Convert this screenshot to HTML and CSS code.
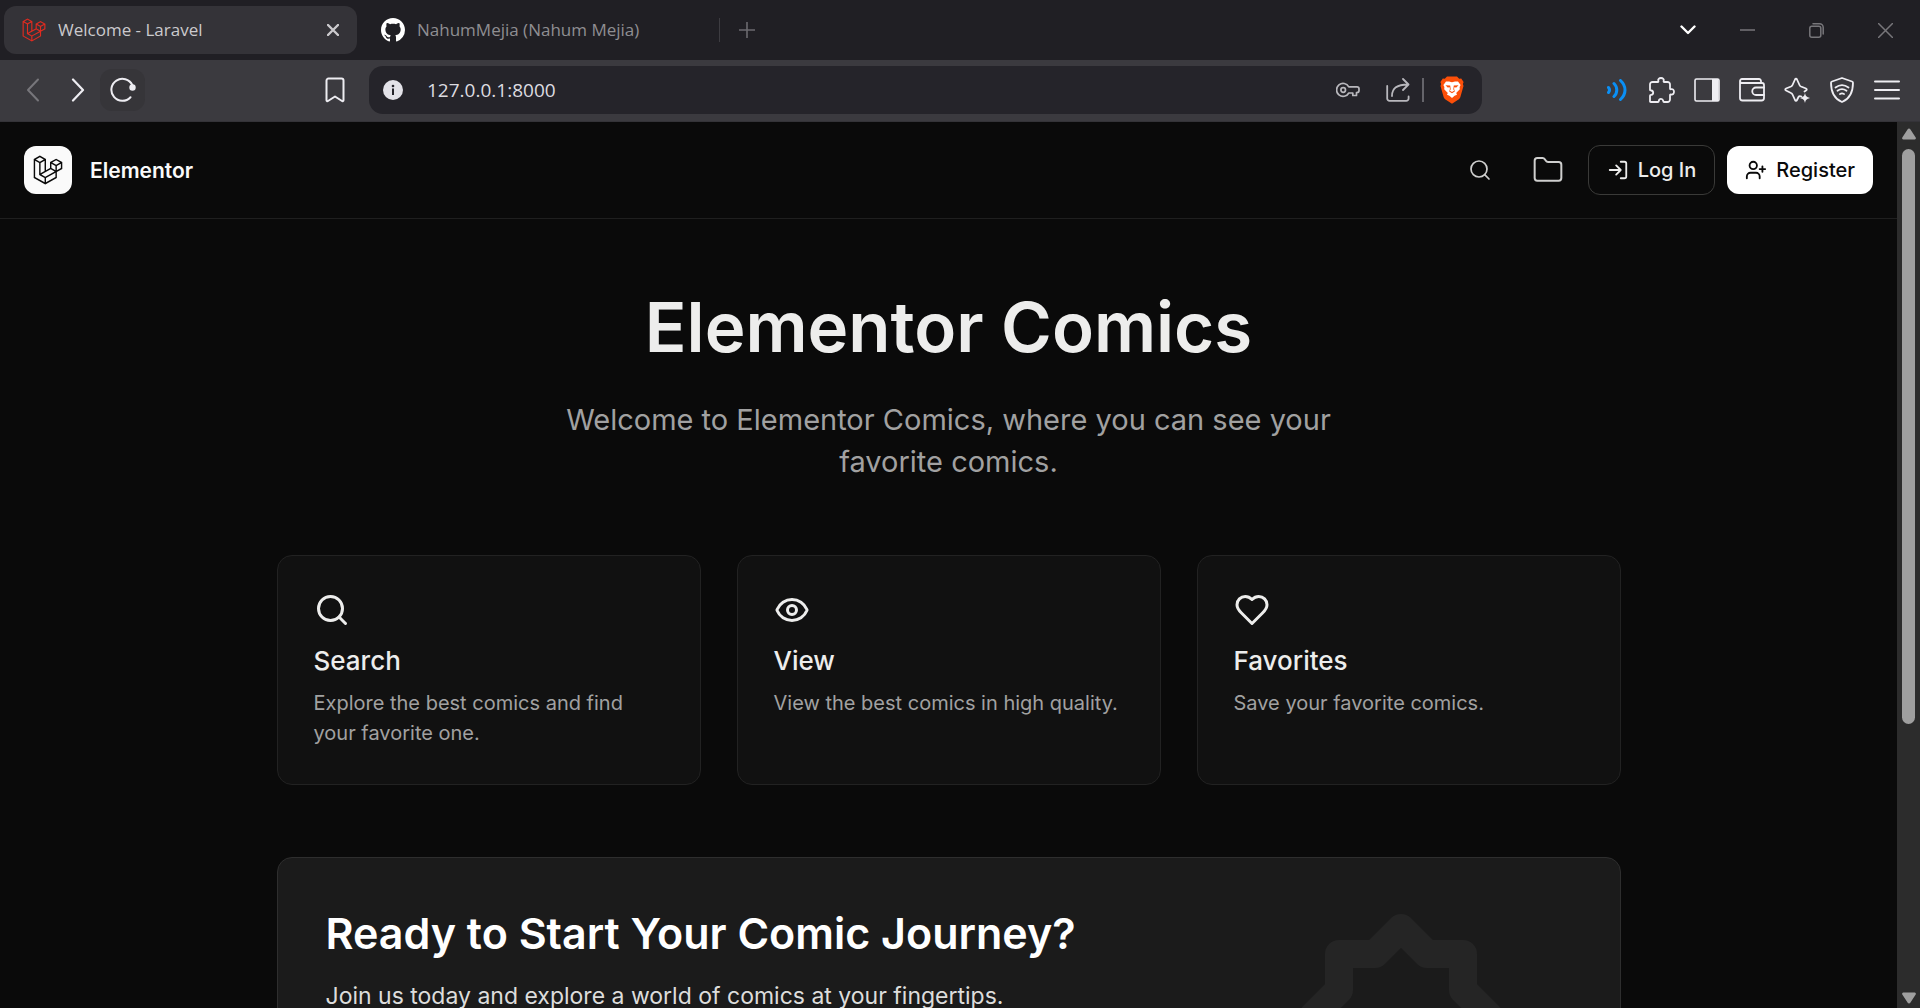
FILE: index.html
```html
<!DOCTYPE html>
<html lang="en">
<head>
<meta charset="utf-8">
<meta name="viewport" content="width=device-width, initial-scale=1">
<title>Welcome - Laravel</title>
<link rel="stylesheet" href="styles.css">
</head>
<body>
<svg class="sprite" aria-hidden="true">
  <symbol id="laravel" viewBox="0 0 40 42"><path fill="currentColor" fill-rule="evenodd" clip-rule="evenodd" d="M17.2 5.633 8.6.855 0 5.633v26.51l16.2 9 16.2-9v-8.442l7.6-4.223V9.856l-8.6-4.777-8.6 4.777V18.3l-5.6 3.111V5.633ZM38 18.301l-5.6 3.11v-6.157l5.6-3.11V18.3Zm-1.06-7.856-5.54 3.078-5.54-3.079 5.54-3.078 5.54 3.079ZM24.8 18.3v-6.157l5.6 3.111v6.158L24.8 18.3Zm-1 1.732 5.54 3.078-13.14 7.302-5.54-3.078 13.14-7.3v-.002Zm-16.2 7.89 7.6 4.222V38.3L2 30.966V7.92l5.6 3.111v16.892ZM8.6 9.3 3.06 6.222 8.6 3.143l5.54 3.08L8.6 9.3Zm21.8 15.51-13.2 7.334V38.3l13.2-7.334v-6.156ZM9.6 11.034l5.6-3.11v14.6l-5.6 3.11v-14.6Z"/></symbol>
  <symbol id="search" viewBox="0 0 24 24"><circle cx="11" cy="11" r="8"/><path d="m21 21-4.3-4.3"/></symbol>
</svg>

<div class="tabstrip">
  <div class="tab tab-active">
    <svg class="favicon favicon-laravel"><use href="#laravel"/></svg>
    <span class="tab-title">Welcome - Laravel</span>
    <button class="tab-close" aria-label="Close tab"><svg width="12" height="12" viewBox="0 0 12 12" class="line"><path stroke-width="2.4" d="m1 1 10 10M11 1 1 11"/></svg></button>
  </div>
  <div class="tab">
    <svg class="favicon" viewBox="0 0 16 16"><path fill="#fff" d="M8 0C3.58 0 0 3.58 0 8c0 3.54 2.29 6.53 5.47 7.59.4.07.55-.17.55-.38 0-.19-.01-.82-.01-1.49-2.01.37-2.53-.49-2.69-.94-.09-.23-.48-.94-.82-1.13-.28-.15-.68-.52-.01-.53.63-.01 1.08.58 1.23.82.72 1.21 1.87.87 2.33.66.07-.52.28-.87.51-1.07-1.78-.2-3.64-.89-3.64-3.95 0-.87.31-1.59.82-2.15-.08-.2-.36-1.02.08-2.12 0 0 .67-.21 2.2.82.64-.18 1.32-.27 2-.27.68 0 1.36.09 2 .27 1.53-1.04 2.2-.82 2.2-.82.44 1.1.16 1.92.08 2.12.51.56.82 1.27.82 2.15 0 3.07-1.87 3.75-3.65 3.95.29.25.54.73.54 1.48 0 1.07-.01 1.93-.01 2.2 0 .21.15.46.55.38A8.013 8.013 0 0 0 16 8c0-4.42-3.58-8-8-8z"/></svg>
    <span class="tab-title">NahumMejia (Nahum Mejia)</span>
  </div>
  <button class="new-tab" aria-label="New tab"><svg width="16" height="16" viewBox="0 0 16 16" class="line"><path stroke-width="1.6" d="M8 0v16M0 8h16"/></svg></button>
  <div class="window-controls">
    <button class="tab-list" aria-label="Search tabs"><svg width="16" height="10" viewBox="0 0 16 10" class="line"><path stroke-width="2.4" d="m1.500 1.500 6.500 6.500 6.500-6.500"/></svg></button>
    <button aria-label="Minimize"><svg width="15" height="15" viewBox="0 0 15 15" class="line"><path stroke-width="1.500" d="M0 7h15"/></svg></button>
    <button aria-label="Restore"><svg width="15" height="15" viewBox="0 0 15 15" class="line"><g stroke-width="1.500"><rect x=".8" y="3.200" width="11" height="11" rx="2"/><path d="M4 .8h6.500a3.700 3.700 0 0 1 3.700 3.700V11"/></g></svg></button>
    <button aria-label="Close window"><svg width="15" height="15" viewBox="0 0 15 15" class="line"><path stroke-width="1.500" d="m0 0 15 15M15 0 0 15"/></svg></button>
  </div>
</div>

<div class="toolbar">
  <div class="toolbar-left">
    <button class="tool dim" aria-label="Back"><svg width="14" height="24" viewBox="0 0 14 24" class="line"><path stroke-width="2" d="M12 1.500 2 12l10 10.500"/></svg></button>
    <button class="tool" aria-label="Forward"><svg width="14" height="24" viewBox="0 0 14 24" class="line"><path stroke-width="2.200" d="m2 1.500 10 10.500L2 22.500"/></svg></button>
    <button class="tool reload" aria-label="Reload"><svg width="26" height="26" viewBox="0 0 26 26" class="line"><path stroke-width="2" d="M20.500 20.200A11 11 0 1 1 22.300 8"/><circle cx="22.500" cy="10.500" r="3.200" fill="currentColor" stroke="none"/></svg></button>
    <button class="tool bookmark" aria-label="Bookmark"><svg width="20" height="26" viewBox="0 0 20 26" class="line"><path stroke-width="2" d="M1.500 3.500a2 2 0 0 1 2-2h13a2 2 0 0 1 2 2v19.700c0 .9-.9 1.300-1.500.8L10 19.500 3 24c-.7.500-1.500.1-1.500-.8z"/></svg></button>
  </div>
  <div class="address">
    <svg width="20" height="20" viewBox="0 0 20 20"><circle cx="10" cy="10" r="10" fill="#e3e2e8"/><circle cx="10" cy="6" r="1.300" fill="#25242a"/><path stroke="#25242a" stroke-width="2" d="M10 8.500V15"/></svg>
    <input type="text" value="127.0.0.1:8000" aria-label="Address">
    <svg width="24" height="16" viewBox="0 0 24 16" class="line address-key"><g stroke-width="1.700"><path d="M12.800 4.800A6.500 6.500 0 1 0 12.800 11h4v2.500h3.700V10.500h.5a2 2 0 0 0 2-2V6.800a2 2 0 0 0-2-2z"/><circle cx="7.200" cy="8" r="2.300"/></g></svg>
    <svg width="24" height="24" viewBox="0 0 24 24" class="line address-share"><g stroke-width="1.800"><path d="M1.200 8v12.500a2.300 2.300 0 0 0 2.300 2.300h16.800a2.300 2.300 0 0 0 2.300-2.300v-2"/><path d="M6 18C6 11 10 6.500 22 6.500M17 1l5.500 5.500L17 12"/></g></svg>
    <span class="address-divider"></span>
    <svg width="24" height="28" viewBox="0 0 24 28"><path fill="#fb4f09" d="M7 .5h10l2.200 2.300 2-.2L23.600 6l-.7 2 .6 2-3.200 11.200a4 4 0 0 1-1.400 2L12 27.800l-6.900-4.600a4 4 0 0 1-1.400-2L.5 10l.6-2-.7-2 2.400-3.400 2 .2z"/><path fill="#fff" d="m12 6.200 3-.7 3 .1L20.600 9l-1 2 .2 2.300-3.600 3.800.8 1.600-2.400 1.100L12 21.900l-2.600-2.100L7 18.700l.8-1.600-3.600-3.800.2-2.300-1-2L6 5.600l3-.1z"/><path fill="#fb4f09" d="m5.500 9.300 4.700.2.500 3.700-.8 1.600L12 16l2.100-1.200-.8-1.600.5-3.700 4.700-.2-2.200 2.200-2-.2-.2 1.800.7 2.300L12 17.300l-2.800-1.900.7-2.300-.2-1.800-2 .2z"/></svg>
  </div>
  <div class="toolbar-right">
    <button class="tool voice" aria-label="Voice"><svg width="20" height="22" viewBox="0 0 20 22" class="line"><g stroke-width="3"><path d="M1.500 8.500a4 4 0 0 1 0 5M7 4.500a9 9 0 0 1 0 13M13.500 1.500c6 5.500 6 13.500 0 19"/></g></svg></button>
    <button class="tool" aria-label="Extensions"><svg width="26" height="26" viewBox="0 0 26 26" class="line"><path stroke-width="1.800" d="M3.500 5h5.200c.8 0 .8-.5.600-1.200C8.800 2.300 10 1 12 1s3.200 1.300 2.700 2.800c-.2.700-.2 1.200.6 1.200h3.200A2.500 2.500 0 0 1 21 7.500v4c0 .8.500.8 1.200.7 1.500-.3 2.800.7 2.800 2.600s-1.300 3-2.800 2.700c-.7-.2-1.200-.1-1.200.7v4.300a2.500 2.500 0 0 1-2.500 2.500H15c-.8 0-.7-.6-.8-1.200-.3-1.300-1-2-2.200-2s-2 .7-2.200 2c-.1.600 0 1.200-.8 1.200H1.800c-.5 0-.8-.3-.8-.8v-5.500c0-.8.500-.8 1.200-.9 1.300-.2 2-.9 2-2.100s-.7-2-2-2.200C1.500 13.400 1 13.500 1 12.700V7.500A2.500 2.500 0 0 1 3.500 5z"/></svg></button>
    <button class="tool" aria-label="Side panel"><svg width="26" height="24" viewBox="0 0 26 24"><rect x="1" y="1" width="24" height="22" rx="1.500" fill="none" stroke="#eeedf2" stroke-width="1.600"/><path fill="#eeedf2" d="M18 1h6.500v22H18z"/></svg></button>
    <button class="tool" aria-label="Wallet"><svg width="26" height="24" viewBox="0 0 26 24" class="line"><g stroke-width="1.800"><path d="M22 5V3a2 2 0 0 0-2-2H3a2 2 0 0 0 0 4h20a2 2 0 0 1 2 2v13a2.500 2.500 0 0 1-2.500 2.500h-19A2.500 2.500 0 0 1 1 20V3"/><path d="M25 9.500h-8a3.700 3.700 0 0 0 0 7.500h8"/></g></svg></button>
    <button class="tool" aria-label="Assistant"><svg width="26" height="26" viewBox="0 0 26 26" class="line"><path stroke-width="1.800" d="M17.500 19.500c-1.500-.5-2.500-.5-3 .5l-1.500 3c-.5 1-1.500 1-2 0l-2.500-5.500a3 3 0 0 0-1.500-1.500L2 13.500c-1-.5-1-1.500 0-2L7 9.500A3 3 0 0 0 8.500 8L11 2.500c.5-1 1.500-1 2 0L15.500 8A3 3 0 0 0 17 9.500l5 2c1 .5 1 1.500 0 2l-1.500 1"/><path fill="currentColor" stroke="none" d="M21 16c.7 3 1.500 4 5 5-3.500 1-4.300 2-5 5-.7-3-1.500-4-5-5 3.500-1 4.300-2 5-5z"/></svg></button>
    <button class="tool" aria-label="VPN"><svg width="24" height="26" viewBox="0 0 24 26" class="line"><g stroke-width="1.800"><path d="m12 1 10 3.500c.6.200 1 .6 1 1.200C23 15 20.500 21.500 12 25 3.500 21.500 1 15 1 5.700c0-.6.400-1 1-1.200z"/><path d="M5.500 10.500c4-3 9-3 13 0M7.500 13.800c3-2.200 6-2.200 9 0M10 17c1.500-.8 2.500-.8 4 0"/></g></svg></button>
    <button class="tool" aria-label="Menu"><svg width="26" height="20" viewBox="0 0 26 20" class="line"><path stroke-width="2" d="M1 1.500h24M1 10h24M1 18.500h24"/></svg></button>
  </div>
</div>

<div class="viewport">
  <div class="page">
    <header class="site-header">
      <a class="brand" href="#">
        <span class="brand-mark"><svg width="30" height="30"><use href="#laravel"/></svg></span>
        <span>Elementor</span>
      </a>
      <nav class="site-nav">
        <button class="icon-button" aria-label="Search"><svg width="24" height="24" class="line"><use href="#search" stroke-width="1.700"/></svg></button>
        <a class="icon-button" href="#" aria-label="Library"><svg width="32" height="32" viewBox="0 0 24 24" class="line"><path stroke-width="1.500" d="M20 20a2 2 0 0 0 2-2V8a2 2 0 0 0-2-2h-7.900a2 2 0 0 1-1.700-.9L9.600 3.900A2 2 0 0 0 7.900 3H4a2 2 0 0 0-2 2v13a2 2 0 0 0 2 2Z"/></svg></a>
        <a class="button button-outline" href="#"><svg width="22" height="22" viewBox="0 0 24 24" class="line"><path stroke-width="2" d="M15 3h4a2 2 0 0 1 2 2v14a2 2 0 0 1-2 2h-4M10 17l5-5-5-5M15 12H3"/></svg>Log In</a>
        <a class="button button-solid" href="#"><svg width="22" height="22" viewBox="0 0 24 24" class="line"><path stroke-width="2" d="M16 21v-2a4 4 0 0 0-4-4H6a4 4 0 0 0-4 4v2M19 8v6M22 11h-6"/><circle cx="9" cy="7" r="4" stroke-width="2"/></svg>Register</a>
      </nav>
    </header>

    <main class="content">
      <section class="hero">
        <h1>Elementor Comics</h1>
        <p>Welcome to Elementor Comics, where you can see your favorite comics.</p>
      </section>

      <section class="features">
        <article class="card">
          <svg width="36" height="36" class="line"><use href="#search" stroke-width="2"/></svg>
          <h2>Search</h2>
          <p>Explore the best comics and find your favorite one.</p>
        </article>
        <article class="card">
          <svg width="36" height="36" viewBox="0 0 24 24" class="line"><g stroke-width="2"><path d="M2.062 12.348a1 1 0 0 1 0-.696 10.750 10.750 0 0 1 19.876 0 1 1 0 0 1 0 .696 10.750 10.750 0 0 1-19.876 0"/><circle cx="12" cy="12" r="3"/></g></svg>
          <h2>View</h2>
          <p>View the best comics in high quality.</p>
        </article>
        <article class="card">
          <svg width="36" height="36" viewBox="0 0 24 24" class="line"><path stroke-width="2" d="M19 14c1.490-1.460 3-3.210 3-5.500A5.500 5.500 0 0 0 16.500 3c-1.760 0-3 .5-4.500 2-1.500-1.500-2.740-2-4.500-2A5.500 5.500 0 0 0 2 8.500c0 2.300 1.500 4.050 3 5.500l7 7Z"/></svg>
          <h2>Favorites</h2>
          <p>Save your favorite comics.</p>
        </article>
      </section>

      <section class="cta">
        <div class="cta-text">
          <h2>Ready to Start Your Comic Journey?</h2>
          <p>Join us today and explore a world of comics at your fingertips.</p>
        </div>
        <div class="cta-art">
          <svg width="220" height="220" viewBox="-110 -110 220 220"><path fill="none" stroke="#252525" stroke-width="28" stroke-linejoin="round" d="M0-88 26-62H62V-26L88 0 62 26V62H26L0 88-26 62H-62V26L-88 0-62-26V-62H-26Z"/></svg>
        </div>
      </section>
    </main>
  </div>
  <div class="scrollbar">
    <svg width="16" height="12" viewBox="0 0 16 12"><path fill="#9f9f9f" d="M6.700 1.200a1.500 1.500 0 0 1 2.600 0l5.400 8.300a1.300 1.300 0 0 1-1 2H2.300a1.300 1.300 0 0 1-1-2z"/></svg>
    <div class="scroll-track"><div class="scroll-thumb"></div></div>
    <svg width="16" height="12" viewBox="0 0 16 12"><path fill="#9f9f9f" d="M6.700 10.800a1.500 1.500 0 0 0 2.600 0l5.400-8.300a1.300 1.300 0 0 0-1-2H2.300a1.300 1.300 0 0 0-1 2z"/></svg>
  </div>
</div>
</body>
</html>
```
FILE: styles.css
```css
* { box-sizing: border-box; }

body {
  margin: 0;
  height: 100vh;
  display: flex;
  flex-direction: column;
  overflow: hidden;
  background: #0a0a0a;
  color: #ededec;
  font-family: Inter, "Liberation Sans", sans-serif;
}

h1, h2, p { margin: 0; }
a { color: inherit; text-decoration: none; }
svg { display: block; flex: none; }
button {
  padding: 0;
  border: 0;
  background: none;
  color: inherit;
  display: flex;
  align-items: center;
  justify-content: center;
}

.sprite { position: absolute; width: 0; height: 0; }
.line { fill: none; stroke: currentColor; stroke-linecap: round; stroke-linejoin: round; }

/* Browser tabs */
.tabstrip {
  flex: none;
  height: 60px;
  padding-left: 4px;
  display: flex;
  align-items: center;
  background: #201f24;
  font: 17px/24px "Open Sans", "Noto Sans", sans-serif;
}
.tab {
  width: 353px;
  height: 48px;
  padding: 0 18px;
  display: flex;
  align-items: center;
  gap: 12px;
  border-radius: 12px;
  color: #8f8e92;
}
.tab + .tab { padding-left: 24px; }
.tab-active { background: #343338; color: #cbcacd; }
.favicon { width: 24px; height: 24px; }
.favicon-laravel { color: #e02b20; }
.tab-title { flex: 1; white-space: nowrap; }
.tab-close { width: 12px; height: 24px; }
.new-tab {
  width: 55px;
  height: 24px;
  margin-left: 9px;
  border-left: 1px solid #3d3c41;
  color: #6b6a6f;
}
.window-controls {
  margin-left: auto;
  align-self: stretch;
  display: flex;
  color: #77767a;
}
.window-controls button { width: 69px; }
.window-controls .tab-list { width: 50px; color: #fff; }

/* Browser toolbar */
.toolbar {
  flex: none;
  height: 62px;
  padding: 0 11px 2px 10px;
  display: flex;
  align-items: center;
  background: #3b3a3f;
  border-bottom: 1px solid #343338;
  color: #eeedf2;
}
.toolbar-left { display: flex; width: 347px; margin-right: 12px; }
.toolbar-right { display: flex; margin-left: 112px; }
.tool { width: 45px; height: 42px; }
.dim { color: #77767b; }
.reload { background: #363539; border-radius: 12px; }
.bookmark { margin-left: auto; }
.voice { color: #0a8ff5; }
.address {
  flex: 1;
  height: 48px;
  padding: 0 18px 0 14px;
  display: flex;
  align-items: center;
  background: #25242a;
  border-radius: 14px;
  color: #b9b8bd;
}
.address input {
  flex: 1;
  min-width: 0;
  margin-left: 24px;
  padding: 0;
  border: 0;
  outline: 0;
  background: none;
  color: #dddce0;
  font: 19px/28px "Open Sans", "Noto Sans", sans-serif;
}
.address-key { margin-right: 26px; }
.address-divider { width: 2px; height: 24px; margin: 0 16px 0 12px; background: #65646a; }

/* Page area and its scrollbar */
.viewport { flex: 1; min-height: 0; display: flex; }
.page { flex: 1; min-width: 0; overflow: hidden; }
.scrollbar {
  width: 23px;
  padding: 6px 0 4px;
  display: flex;
  flex-direction: column;
  align-items: center;
  gap: 9px;
  background: #2c2c2c;
}
.scroll-track { flex: 1; }
.scroll-thumb { width: 13px; height: 69%; border-radius: 7px; background: #9f9f9f; }

/* Site header */
.site-header {
  height: 97px;
  padding: 0 24px;
  display: flex;
  align-items: center;
  justify-content: space-between;
  border-bottom: 1px solid #1f1f1f;
}
.brand {
  display: flex;
  align-items: center;
  gap: 18px;
  font-size: 21px;
  font-weight: 600;
  color: #fafafa;
}
.brand-mark {
  width: 48px;
  height: 48px;
  display: flex;
  align-items: center;
  justify-content: center;
  border-radius: 12px;
  background: #fafafa;
  color: #0a0a0a;
}
.site-nav { display: flex; align-items: center; gap: 12px; }
.icon-button {
  width: 56px;
  height: 48px;
  display: flex;
  align-items: center;
  justify-content: center;
  color: #cfcfce;
}
.button {
  height: 48px;
  padding: 0 18px;
  display: flex;
  align-items: center;
  gap: 9px;
  border-radius: 12px;
  font-size: 20px;
  font-weight: 500;
}
.button-outline { height: 50px; border: 1px solid #3a3a38; }
.button-solid { background: #fff; color: #0a0a0a; }

/* Page body */
.content {
  max-width: 1344px;
  margin: 0 auto;
  padding-top: 72px;
}
.hero {
  display: flex;
  flex-direction: column;
  align-items: center;
  gap: 36px;
  text-align: center;
}
.hero h1 { font-size: 69px; line-height: 72px; font-weight: 600; }
.hero p { max-width: 864px; font-size: 29px; line-height: 42px; color: #a1a1a1; }

.features {
  margin-top: 72px;
  display: grid;
  grid-template-columns: repeat(3, 1fr);
  gap: 36px;
}
.card {
  padding: 36px;
  border: 1px solid #222;
  border-radius: 15px;
  background: #111;
}
.card h2 { margin: 15px 0 9px; font-size: 26px; line-height: 36px; font-weight: 500; }
.card p { font-size: 20px; line-height: 30px; color: #a1a1a1; }

.cta {
  margin-top: 72px;
  padding: 48px;
  display: flex;
  justify-content: space-between;
  border: 1px solid #2e2e2e;
  border-radius: 15px;
  background: #1b1b1b;
}
.cta h2 { font-size: 43px; line-height: 54px; font-weight: 600; color: #fff; }
.cta p { margin-top: 18px; font-size: 23px; line-height: 36px; color: #dddddc; }
.cta-art { width: 342px; display: flex; justify-content: center; }
```
